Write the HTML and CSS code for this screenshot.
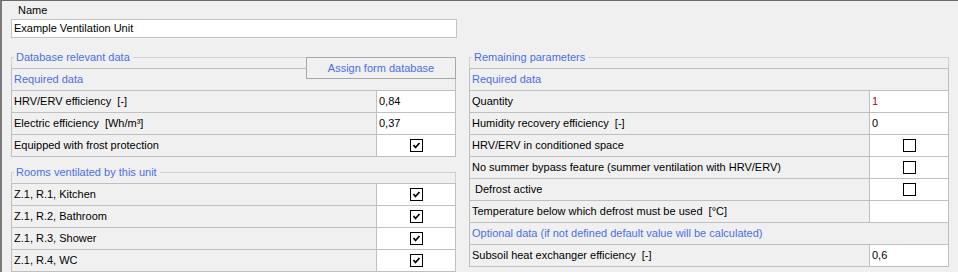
FILE: index.html
```html
<!DOCTYPE html>
<html lang="en">
<head>
    <meta charset="UTF-8">
    <title>Ventilation Unit</title>
    <link rel="stylesheet" href="styles.css">
</head>
<body>
    <div class="window">
        <div class="name-block">
            <div class="name-label">Name</div>
            <div class="textbox">Example Ventilation Unit</div>
        </div>

        <div class="columns">
            <!-- Left column -->
            <div class="column left-column">
                <fieldset class="group">
                    <legend>Database relevant data</legend>
                    <div class="grid">
                        <button class="assign-btn">Assign form database</button>
                        <div class="row section">Required data</div>
                        <div class="row">
                            <div class="label">HRV/ERV efficiency &nbsp;[-]</div>
                            <div class="value">0,84</div>
                        </div>
                        <div class="row">
                            <div class="label">Electric efficiency &nbsp;[Wh/m³]</div>
                            <div class="value">0,37</div>
                        </div>
                        <div class="row">
                            <div class="label">Equipped with frost protection</div>
                            <div class="value check-cell"><span class="checkbox checked"></span></div>
                        </div>
                    </div>
                </fieldset>

                <fieldset class="group rooms-group">
                    <legend>Rooms ventilated by this unit</legend>
                    <div class="grid">
                        <div class="row">
                            <div class="label">Z.1, R.1, Kitchen</div>
                            <div class="value check-cell"><span class="checkbox checked"></span></div>
                        </div>
                        <div class="row">
                            <div class="label">Z.1, R.2, Bathroom</div>
                            <div class="value check-cell"><span class="checkbox checked"></span></div>
                        </div>
                        <div class="row">
                            <div class="label">Z.1, R.3, Shower</div>
                            <div class="value check-cell"><span class="checkbox checked"></span></div>
                        </div>
                        <div class="row">
                            <div class="label">Z.1, R.4, WC</div>
                            <div class="value check-cell"><span class="checkbox checked"></span></div>
                        </div>
                    </div>
                </fieldset>
            </div>

            <!-- Right column -->
            <div class="column right-column">
                <fieldset class="group">
                    <legend>Remaining parameters</legend>
                    <div class="grid">
                        <div class="row section">Required data</div>
                        <div class="row">
                            <div class="label">Quantity</div>
                            <div class="value red">1</div>
                        </div>
                        <div class="row">
                            <div class="label">Humidity recovery efficiency &nbsp;[-]</div>
                            <div class="value">0</div>
                        </div>
                        <div class="row">
                            <div class="label">HRV/ERV in conditioned space</div>
                            <div class="value check-cell"><span class="checkbox"></span></div>
                        </div>
                        <div class="row">
                            <div class="label">No summer bypass feature (summer ventilation with HRV/ERV)</div>
                            <div class="value check-cell"><span class="checkbox"></span></div>
                        </div>
                        <div class="row">
                            <div class="label">&nbsp;Defrost active</div>
                            <div class="value check-cell"><span class="checkbox"></span></div>
                        </div>
                        <div class="row">
                            <div class="label">Temperature below which defrost must be used &nbsp;[°C]</div>
                            <div class="value"></div>
                        </div>
                        <div class="row section">Optional data (if not defined default value will be calculated)</div>
                        <div class="row">
                            <div class="label">Subsoil heat exchanger efficiency &nbsp;[-]</div>
                            <div class="value">0,6</div>
                        </div>
                    </div>
                </fieldset>
            </div>
        </div>
    </div>
</body>
</html>
```

FILE: styles.css
```css
/* General */
body {
    margin: 0;
    padding: 0;
    background: #f0f0f0;
    font-family: "Liberation Sans", Arial, sans-serif;
    font-size: 11px;
    color: #000;
}

.window {
    height: 272px;
    box-sizing: border-box;
    border-top: 1px solid #6a6a6a;
    border-left: 2px solid #7a7a7a;
    padding-left: 9px;
    overflow: hidden;
}

/* Name */
.name-block {
    width: 446px;
}

.name-label {
    margin-top: 3px;
    padding-left: 7px;
    line-height: 13px;
}

.textbox {
    margin-top: 2px;
    height: 17px;
    line-height: 17px;
    padding-left: 2px;
    background: #fff;
    border: 1px solid #c4c4c4;
}

/* Columns */
.columns {
    display: flex;
    gap: 13px;
    margin-top: 13px;
}

.left-column {
    width: 445px;
}

.right-column {
    width: 480px;
}

/* Group boxes */
.group {
    margin: 0;
    padding: 4px 0 0 0;
    border: 1px solid #d0d0d0;
    border-bottom: none;
    min-width: 0;
}

.group legend {
    margin-left: 2px;
    padding: 0 3px 0 2px;
    line-height: 13px;
    color: #4a6fe3;
}

.rooms-group {
    margin-top: 9px;
}

/* Grid */
.grid {
    position: relative;
    margin: 0 -1px;
    border: 1px solid #bfbfbf;
    border-bottom: none;
}

.row {
    display: grid;
    grid-template-columns: 1fr 79px;
    height: 21px;
    line-height: 21px;
    border-bottom: 1px solid #bfbfbf;
    white-space: nowrap;
}

.row.section {
    display: block;
    padding-left: 2px;
    color: #4a6fe3;
}

.label {
    padding-left: 2px;
    overflow: hidden;
}

.value {
    border-left: 1px solid #bfbfbf;
    background: #fff;
    padding-left: 2px;
}

.value.red {
    color: #a01010;
}

.check-cell {
    display: flex;
    align-items: center;
    justify-content: center;
    padding-left: 0;
}

.checkbox {
    display: block;
    width: 11px;
    height: 11px;
    border: 1px solid #000;
    background: #fff no-repeat center;
}

.checkbox.checked {
    background-image: url("data:image/svg+xml;utf8,<svg xmlns='http://www.w3.org/2000/svg' width='11' height='11'><polyline points='2.5,5 4.5,7.5 8.5,3' fill='none' stroke='black' stroke-width='1.7'/></svg>");
}

/* Button over the grid header */
.assign-btn {
    position: absolute;
    top: -12px;
    right: -1px;
    width: 150px;
    height: 22px;
    margin: 0;
    padding: 0;
    background: #f0f0f0;
    border: 1px solid #a8a8a8;
    font-family: inherit;
    font-size: 11px;
    color: #4a6fe3;
}
```
